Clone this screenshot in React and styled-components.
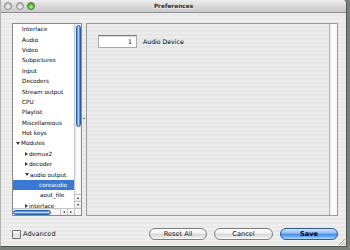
import React from 'react';
import styled, { createGlobalStyle, css } from 'styled-components';

const GlobalStyle = createGlobalStyle`
html, body {
  margin: 0;
  padding: 0;
  width: 350px;
  height: 250px;
  overflow: hidden;
  background: #7a807c;
}
* { box-sizing: border-box; }
`;

const aquaV = css`
  background: linear-gradient(to right, #3b7de0 0%, #8cc0f6 35%, #b8dcff 55%, #5d9ae8 80%, #3a78d8 100%);
`;

const aquaH = css`
  background: linear-gradient(to bottom, #3b7de0 0%, #8cc0f6 35%, #b8dcff 55%, #5d9ae8 80%, #3a78d8 100%);
`;

const Window = styled.div`
  position: relative;
  width: 347px;
  height: 247px;
  display: flex;
  flex-direction: column;
  background: repeating-linear-gradient(to bottom, #eeeeee 0 2px, #e8e8e8 2px 4px);
  border-right: 1px solid #4f5551;
  border-bottom: 1px solid #4f5551;
  border-left: 1px solid #b0b0b0;
  border-top-right-radius: 4px;
  font-family: "DejaVu Sans", "Liberation Sans", sans-serif;
  color: #000;
`;

const TitleBar = styled.div`
  height: 13px;
  display: grid;
  grid-template-columns: 1fr auto 1fr;
  align-items: center;
  background: linear-gradient(to bottom, #ededed, #d6d6d6 60%, #c9c9c9);
  border-bottom: 1px solid #8e8e8e;
  border-top-right-radius: 4px;
`;

const Lights = styled.div`
  display: flex;
  gap: 3.5px;
  padding-left: 3px;
`;

const Light = styled.span`
  width: 8px;
  height: 8px;
  border-radius: 50%;
  border: 1px solid ${p => (p.$green ? '#3f7f2a' : '#8d8d8d')};
  background: ${p =>
    p.$green
      ? 'radial-gradient(circle at 50% 70%, #b8f08a 0%, #5cbd38 55%, #2f7f1d 100%)'
      : 'radial-gradient(circle at 50% 70%, #f4f4f4 0%, #d0d0d0 55%, #a8a8a8 100%)'};
`;

const Title = styled.div`
  font-size: 5.8px;
  font-weight: bold;
  color: #2e2e2e;
  text-shadow: 0 1px 0 rgba(255, 255, 255, 0.6);
`;

const Body = styled.div`
  flex: 1;
  display: flex;
  flex-direction: column;
  padding: 10px 8px 0 11px;
`;

const Main = styled.div`
  display: flex;
  height: 193px;
`;

const Tree = styled.div`
  width: 70px;
  height: 100%;
  border: 1px solid #8a8a8a;
  background: #fff;
  display: grid;
  grid-template-columns: 1fr 7px;
  grid-template-rows: 1fr 7px;
  overflow: hidden;
`;

const List = styled.div`
  overflow: hidden;
  display: flex;
  flex-direction: column;
`;

const Row = styled.div`
  height: 10.4px;
  flex: none;
  display: flex;
  align-items: center;
  padding-left: ${p => p.$indent}px;
  font-size: 5.7px;
  white-space: nowrap;
  color: ${p => (p.$selected ? '#fff' : '#000')};
  background: ${p => (p.$selected ? '#3a78d6' : 'transparent')};
`;

const Disclosure = styled.span`
  width: 0;
  height: 0;
  margin-right: 1px;
  flex: none;
  ${p =>
    p.$open
      ? css`
          border-left: 2px solid transparent;
          border-right: 2px solid transparent;
          border-top: 3px solid #3a3a3a;
        `
      : css`
          border-top: 2px solid transparent;
          border-bottom: 2px solid transparent;
          border-left: 3px solid #3a3a3a;
          margin-left: 1px;
        `}
`;

const VScroll = styled.div`
  display: flex;
  flex-direction: column;
  align-items: center;
  background: linear-gradient(to right, #e4e4e4, #ffffff 40%, #f2f2f2);
  border-left: 1px solid #c6c6c6;
`;

const VThumb = styled.div`
  width: 5px;
  height: 102px;
  margin-top: 1px;
  border-radius: 3px;
  border: 1px solid #2a5ea8;
  ${aquaV};
`;

const HScroll = styled.div`
  display: flex;
  align-items: center;
  background: linear-gradient(to bottom, #e4e4e4, #ffffff 40%, #f2f2f2);
  border-top: 1px solid #c6c6c6;
`;

const HThumb = styled.div`
  width: 38px;
  height: 5px;
  margin-left: 0;
  border-radius: 3px;
  border: 1px solid #2a5ea8;
  ${aquaH};
`;

const Track = styled.div`
  flex: 1;
`;

const ArrowCell = styled.div`
  width: 7px;
  height: 7px;
  flex: none;
  display: flex;
  align-items: center;
  justify-content: center;
  border-${p => (p.$vertical ? 'top' : 'left')}: 1px solid #c0c0c0;
  background: linear-gradient(to bottom, #ffffff, #e6e6e6);
`;

const Tri = styled.span`
  width: 0;
  height: 0;
  ${p => {
    const c = '#222';
    if (p.$dir === 'up')
      return css`border-left: 1.5px solid transparent; border-right: 1.5px solid transparent; border-bottom: 2px solid ${c};`;
    if (p.$dir === 'down')
      return css`border-left: 1.5px solid transparent; border-right: 1.5px solid transparent; border-top: 2px solid ${c};`;
    if (p.$dir === 'left')
      return css`border-top: 1.5px solid transparent; border-bottom: 1.5px solid transparent; border-right: 2px solid ${c};`;
    return css`border-top: 1.5px solid transparent; border-bottom: 1.5px solid transparent; border-left: 2px solid ${c};`;
  }}
`;

const Corner = styled.div`
  background: #f4f4f4;
  border-top: 1px solid #c6c6c6;
  border-left: 1px solid #c6c6c6;
`;

const Splitter = styled.div`
  width: 4px;
  display: flex;
  align-items: center;
  justify-content: center;
`;

const Grip = styled.span`
  width: 0;
  height: 0;
  border-left: 1px solid transparent;
  border-right: 1px solid transparent;
  border-bottom: 2px solid #555;
  margin-top: -3px;
`;

const Panel = styled.div`
  width: 252px;
  height: 100%;
  display: flex;
  border: 1px solid #9a9a9a;
  background: repeating-linear-gradient(to bottom, #ebebeb 0 2px, #e5e5e5 2px 4px);
`;

const PanelContent = styled.div`
  flex: 1;
  padding: 11px 0 0 11px;
`;

const Field = styled.div`
  display: flex;
  align-items: center;
`;

const NumberBox = styled.div`
  width: 39px;
  height: 13px;
  background: #fff;
  border: 1px solid #a8a8a8;
  border-top-color: #7c7c7c;
  box-shadow: inset 0 1px 0 #d8d8d8;
  font-size: 6.2px;
  display: flex;
  align-items: center;
  justify-content: flex-end;
  padding-right: 4px;
`;

const FieldLabel = styled.span`
  margin-left: 6px;
  font-size: 6.2px;
`;

const PanelScroll = styled.div`
  width: 8px;
  border-left: 1px solid #b4b4b4;
  background: linear-gradient(to right, #ececec, #ffffff 40%, #f6f6f6);
`;

const Footer = styled.div`
  display: flex;
  align-items: center;
  margin-top: 12px;
  height: 12px;
`;

const Check = styled.label`
  display: flex;
  align-items: center;
  gap: 2px;
  font-size: 6.6px;
  color: #111;
`;

const Box = styled.span`
  width: 9px;
  height: 9px;
  border: 1px solid #6f6f6f;
  border-radius: 1px;
  background: linear-gradient(to bottom, #ffffff, #dcdcdc 60%, #f0f0f0);
`;

const Buttons = styled.div`
  margin-left: auto;
  display: flex;
  gap: 7px;
`;

const Button = styled.div`
  width: ${p => p.$w}px;
  height: 12px;
  border-radius: 6px;
  display: flex;
  align-items: center;
  justify-content: center;
  font-size: 6.6px;
  ${p =>
    p.$primary
      ? css`
          border: 1px solid #2f5895;
          background: linear-gradient(to bottom, #cfe6ff 0%, #8ec0f6 40%, #4a90ea 55%, #6fb0f6 80%, #bde2ff 100%);
          color: #000;
          font-weight: bold;
        `
      : css`
          border: 1px solid #7d7d7d;
          background: linear-gradient(to bottom, #ffffff 0%, #f2f2f2 40%, #d9d9d9 55%, #ececec 85%, #ffffff 100%);
          color: #111;
        `}
`;

const ResizeGrip = styled.svg`
  position: absolute;
  right: 1px;
  bottom: 1px;
`;

const rows = [
  { label: 'Interface', indent: 9 },
  { label: 'Audio', indent: 9 },
  { label: 'Video', indent: 9 },
  { label: 'Subpictures', indent: 9 },
  { label: 'Input', indent: 9 },
  { label: 'Decoders', indent: 9 },
  { label: 'Stream output', indent: 9 },
  { label: 'CPU', indent: 9 },
  { label: 'Playlist', indent: 9 },
  { label: 'Miscellaneous', indent: 9 },
  { label: 'Hot keys', indent: 9 },
  { label: 'Modules', indent: 3, arrow: 'open' },
  { label: 'demux2', indent: 11, arrow: 'closed' },
  { label: 'decoder', indent: 11, arrow: 'closed' },
  { label: 'audio output', indent: 12, arrow: 'open' },
  { label: 'coreaudio', indent: 26, selected: true },
  { label: 'aout_file', indent: 27 },
  { label: 'interface', indent: 11, arrow: 'closed' },
];

export default function App() {
  return (
    <>
      <GlobalStyle />
      <Window>
        <TitleBar>
          <Lights>
            <Light />
            <Light />
            <Light $green />
          </Lights>
          <Title>Preferences</Title>
          <span />
        </TitleBar>
        <Body>
          <Main>
            <Tree>
              <List>
                {rows.map(r => (
                  <Row key={r.label} $indent={r.indent} $selected={r.selected}>
                    {r.arrow && <Disclosure $open={r.arrow === 'open'} />}
                    {r.label}
                  </Row>
                ))}
              </List>
              <VScroll>
                <VThumb />
                <Track />
                <ArrowCell $vertical>
                  <Tri $dir="up" />
                </ArrowCell>
                <ArrowCell $vertical>
                  <Tri $dir="down" />
                </ArrowCell>
              </VScroll>
              <HScroll>
                <HThumb />
                <Track />
                <ArrowCell>
                  <Tri $dir="left" />
                </ArrowCell>
                <ArrowCell>
                  <Tri $dir="right" />
                </ArrowCell>
              </HScroll>
              <Corner />
            </Tree>
            <Splitter>
              <Grip />
            </Splitter>
            <Panel>
              <PanelContent>
                <Field>
                  <NumberBox>1</NumberBox>
                  <FieldLabel>Audio Device</FieldLabel>
                </Field>
              </PanelContent>
              <PanelScroll />
            </Panel>
          </Main>
          <Footer>
            <Check>
              <Box />
              Advanced
            </Check>
            <Buttons>
              <Button $w={58}>Reset All</Button>
              <Button $w={59}>Cancel</Button>
              <Button $w={58} $primary>Save</Button>
            </Buttons>
          </Footer>
        </Body>
        <ResizeGrip width="8" height="8" viewBox="0 0 8 8">
          <path d="M2 8 L8 2 M4.5 8 L8 4.5 M7 8 L8 7" stroke="#9a9a9a" strokeWidth="0.8" />
        </ResizeGrip>
      </Window>
    </>
  );
}
